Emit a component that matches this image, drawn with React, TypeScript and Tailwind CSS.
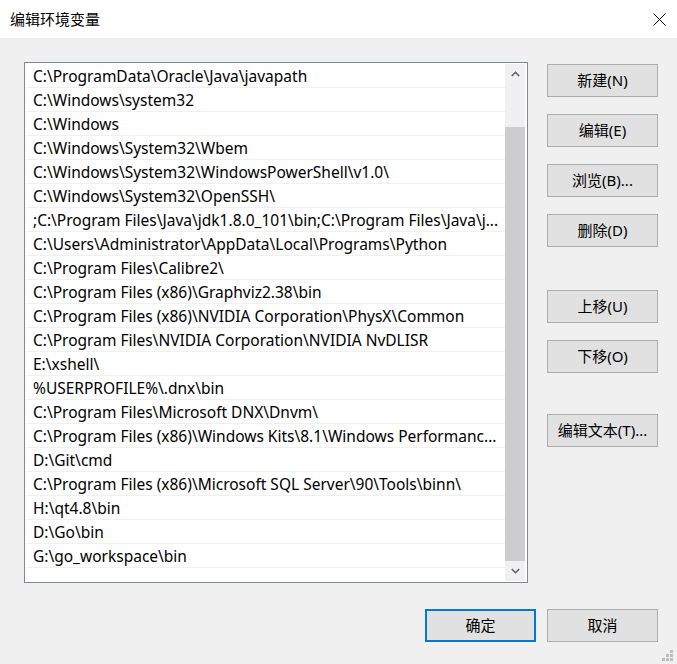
import React from "react";

const paths = [
  "C:\\ProgramData\\Oracle\\Java\\javapath",
  "C:\\Windows\\system32",
  "C:\\Windows",
  "C:\\Windows\\System32\\Wbem",
  "C:\\Windows\\System32\\WindowsPowerShell\\v1.0\\",
  "C:\\Windows\\System32\\OpenSSH\\",
  ";C:\\Program Files\\Java\\jdk1.8.0_101\\bin;C:\\Program Files\\Java\\j...",
  "C:\\Users\\Administrator\\AppData\\Local\\Programs\\Python",
  "C:\\Program Files\\Calibre2\\",
  "C:\\Program Files (x86)\\Graphviz2.38\\bin",
  "C:\\Program Files (x86)\\NVIDIA Corporation\\PhysX\\Common",
  "C:\\Program Files\\NVIDIA Corporation\\NVIDIA NvDLISR",
  "E:\\xshell\\",
  "%USERPROFILE%\\.dnx\\bin",
  "C:\\Program Files\\Microsoft DNX\\Dnvm\\",
  "C:\\Program Files (x86)\\Windows Kits\\8.1\\Windows Performanc...",
  "D:\\Git\\cmd",
  "C:\\Program Files (x86)\\Microsoft SQL Server\\90\\Tools\\binn\\",
  "H:\\qt4.8\\bin",
  "D:\\Go\\bin",
  "G:\\go_workspace\\bin",
];

function Btn({ label, primary, className = "" }: { label: string; primary?: boolean; className?: string }) {
  return (
    <button
      className={`w-[111px] h-[33px] bg-[#e1e1e1] flex items-center justify-center text-[15px] text-black ${
        primary ? "border-2 border-[#0078d7]" : "border border-[#adadad]"
      } ${className}`}
    >
      {label}
    </button>
  );
}

export default function App() {
  return (
    <div className="w-[677px] h-[664px] flex flex-col bg-[#f0f0f0] relative overflow-hidden font-['Noto_Sans','Noto_Sans_CJK_SC',sans-serif] text-black">
      {/* Title bar */}
      <div className="h-[38px] bg-white flex items-center justify-between pl-[10px] pr-[11px] shrink-0">
        <span className="text-[15px] leading-none">编辑环境变量</span>
        <svg width="13" height="13" viewBox="0 0 13 13" className="block">
          <path d="M0.5 0.5 L12.5 12.5 M12.5 0.5 L0.5 12.5" stroke="#000" strokeWidth="1" fill="none" />
        </svg>
      </div>

      {/* Body */}
      <div className="flex-1 flex flex-col pl-[24px] pr-[19px] pt-[24px]">
        <div className="flex gap-[19px]">
          {/* List box */}
          <div className="w-[504px] h-[521px] border border-[#828790] bg-white p-px flex">
            <div className="flex-1 flex flex-col overflow-hidden">
              {paths.map((p, i) => (
                <div
                  key={i}
                  className="h-[24px] shrink-0 border-b border-[#f0f0f0] pl-[7px] pt-[2px] flex items-center text-[15.5px] whitespace-nowrap overflow-hidden"
                >
                  {p}
                </div>
              ))}
            </div>
            {/* Scrollbar */}
            <div className="w-[20px] mr-px bg-[#f0f0f0] flex flex-col">
              <div className="h-[20px] flex items-center justify-center">
                <svg width="9" height="6" viewBox="0 0 9 6">
                  <path d="M0.8 5 L4.5 1.3 L8.2 5" stroke="#606060" strokeWidth="1.6" fill="none" />
                </svg>
              </div>
              <div className="h-[43px]" />
              <div className="flex-1 bg-[#cdcdcd]" />
              <div className="h-[20px] flex items-center justify-center">
                <svg width="9" height="6" viewBox="0 0 9 6">
                  <path d="M0.8 1 L4.5 4.7 L8.2 1" stroke="#606060" strokeWidth="1.6" fill="none" />
                </svg>
              </div>
            </div>
          </div>

          {/* Side buttons */}
          <div className="flex flex-col pt-[2px]">
            <Btn label="新建(N)" />
            <Btn label="编辑(E)" className="mt-[17px]" />
            <Btn label="浏览(B)..." className="mt-[17px]" />
            <Btn label="删除(D)" className="mt-[17px]" />
            <Btn label="上移(U)" className="mt-[43px]" />
            <Btn label="下移(O)" className="mt-[17px]" />
            <Btn label="编辑文本(T)..." className="mt-[41px]" />
          </div>
        </div>

        {/* Bottom buttons */}
        <div className="flex justify-end gap-[11px] mt-[26px]">
          <Btn label="确定" primary />
          <Btn label="取消" />
        </div>
      </div>

      {/* Resize grip */}
      <div className="absolute right-[4px] bottom-[3px] grid grid-cols-3 gap-px w-[11px] h-[11px]">
        <span />
        <span />
        <span className="bg-[#bcbcbc]" />
        <span />
        <span className="bg-[#bcbcbc]" />
        <span className="bg-[#bcbcbc]" />
        <span className="bg-[#bcbcbc]" />
        <span className="bg-[#bcbcbc]" />
        <span className="bg-[#bcbcbc]" />
      </div>
    </div>
  );
}
